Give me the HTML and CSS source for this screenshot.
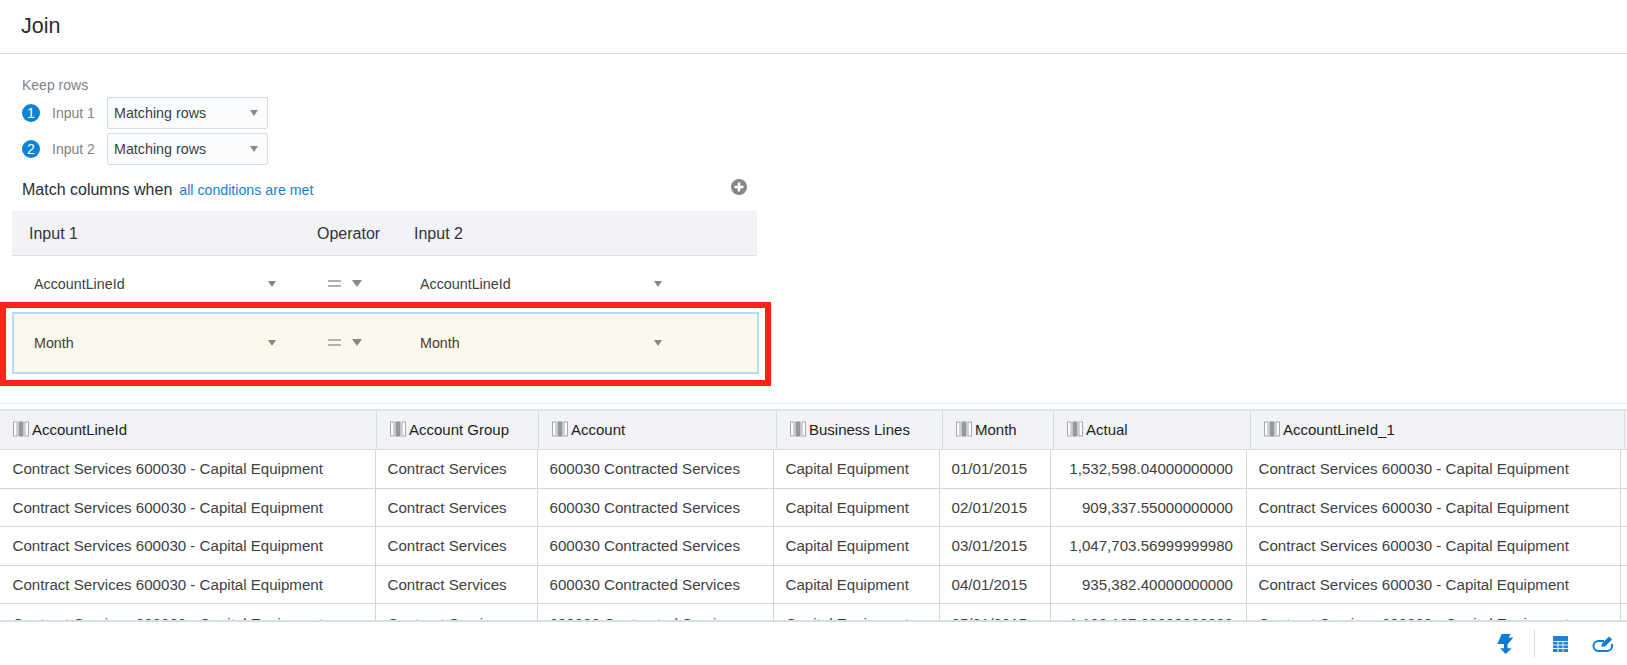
FILE: index.html
```html
<!DOCTYPE html>
<html>
<head>
  <title>Join</title>
  <link rel="stylesheet" href="styles.css">
</head>
<body>
  <svg class="defs" width="0" height="0">
    <symbol id="col-icon" viewBox="0 0 16 16">
      <rect x="0.5" y="1" width="3.5" height="14" fill="#fff" stroke="#a5a8ab"/>
      <rect x="5.5" y="0.5" width="5" height="15" fill="#96999c"/>
      <rect x="12" y="1" width="3.5" height="14" fill="#fff" stroke="#a5a8ab"/>
    </symbol>
  </svg>

  <div class="page">
    <div class="title-bar">Join</div>

    <div class="editor">
      <div class="keep-label">Keep rows</div>
      <div class="keep-row">
        <span class="badge">1</span>
        <span class="keep-input">Input 1</span>
        <div class="select">Matching rows<span class="caret"></span></div>
      </div>
      <div class="keep-row">
        <span class="badge">2</span>
        <span class="keep-input">Input 2</span>
        <div class="select">Matching rows<span class="caret"></span></div>
      </div>

      <div class="match-line">
        <span class="match-text">Match columns when</span>
        <a class="match-link">all conditions are met</a>
        <svg class="add-icon" width="16" height="16" viewBox="0 0 16 16">
          <circle cx="8" cy="8" r="8" fill="#84878b"/>
          <path d="M8 3.5v9M3.5 8h9" stroke="#fff" stroke-width="2.6"/>
        </svg>
      </div>

      <div class="cond-head">
        <div class="cond-col1">Input 1</div>
        <div class="cond-col2">Operator</div>
        <div class="cond-col3">Input 2</div>
      </div>

      <div class="cond-row">
        <div class="cond-col1 cond-cell">AccountLineId<span class="caret"></span></div>
        <div class="cond-col2 cond-op"><span class="equals"></span><span class="caret big"></span></div>
        <div class="cond-col3 cond-cell">AccountLineId<span class="caret"></span></div>
      </div>

      <div class="red-box">
        <div class="cond-row selected">
          <div class="cond-col1 cond-cell">Month<span class="caret"></span></div>
          <div class="cond-col2 cond-op"><span class="equals"></span><span class="caret big"></span></div>
          <div class="cond-col3 cond-cell">Month<span class="caret"></span></div>
        </div>
      </div>
    </div>

    <div class="grid-wrap">
      <div class="grid-head">
        <div class="head-cell"><svg class="col-icon"><use href="#col-icon"/></svg>AccountLineId</div>
        <div class="head-cell"><svg class="col-icon"><use href="#col-icon"/></svg>Account Group</div>
        <div class="head-cell"><svg class="col-icon"><use href="#col-icon"/></svg>Account</div>
        <div class="head-cell"><svg class="col-icon"><use href="#col-icon"/></svg>Business Lines</div>
        <div class="head-cell"><svg class="col-icon"><use href="#col-icon"/></svg>Month</div>
        <div class="head-cell"><svg class="col-icon"><use href="#col-icon"/></svg>Actual</div>
        <div class="head-cell"><svg class="col-icon"><use href="#col-icon"/></svg>AccountLineId_1</div>
      </div>
      <div class="grid-body">
        <div class="grid-row">
          <div class="cell">Contract Services 600030 - Capital Equipment</div>
          <div class="cell">Contract Services</div>
          <div class="cell">600030 Contracted Services</div>
          <div class="cell">Capital Equipment</div>
          <div class="cell">01/01/2015</div>
          <div class="cell num">1,532,598.04000000000</div>
          <div class="cell">Contract Services 600030 - Capital Equipment</div>
        </div>
        <div class="grid-row">
          <div class="cell">Contract Services 600030 - Capital Equipment</div>
          <div class="cell">Contract Services</div>
          <div class="cell">600030 Contracted Services</div>
          <div class="cell">Capital Equipment</div>
          <div class="cell">02/01/2015</div>
          <div class="cell num">909,337.55000000000</div>
          <div class="cell">Contract Services 600030 - Capital Equipment</div>
        </div>
        <div class="grid-row">
          <div class="cell">Contract Services 600030 - Capital Equipment</div>
          <div class="cell">Contract Services</div>
          <div class="cell">600030 Contracted Services</div>
          <div class="cell">Capital Equipment</div>
          <div class="cell">03/01/2015</div>
          <div class="cell num">1,047,703.56999999980</div>
          <div class="cell">Contract Services 600030 - Capital Equipment</div>
        </div>
        <div class="grid-row">
          <div class="cell">Contract Services 600030 - Capital Equipment</div>
          <div class="cell">Contract Services</div>
          <div class="cell">600030 Contracted Services</div>
          <div class="cell">Capital Equipment</div>
          <div class="cell">04/01/2015</div>
          <div class="cell num">935,382.40000000000</div>
          <div class="cell">Contract Services 600030 - Capital Equipment</div>
        </div>
        <div class="grid-row">
          <div class="cell">Contract Services 600030 - Capital Equipment</div>
          <div class="cell">Contract Services</div>
          <div class="cell">600030 Contracted Services</div>
          <div class="cell">Capital Equipment</div>
          <div class="cell">05/01/2015</div>
          <div class="cell num">1,120,167.89000000000</div>
          <div class="cell">Contract Services 600030 - Capital Equipment</div>
        </div>
      </div>
    </div>

    <div class="footer">
      <svg class="foot-icon" width="18" height="20" viewBox="0 0 18 20">
        <path d="M5.700 0H14.700L12.500 3.500H17.300L11.500 10.500V14.300H15.700L9.700 20L4 14.300H8V10H1.300Z" fill="#0d7bd0"/>
      </svg>
      <span class="foot-sep"></span>
      <svg class="foot-icon" width="15" height="16" viewBox="0 0 15 16">
        <rect width="15" height="16" fill="#1a83d6"/>
        <path d="M0 5.500h15M0 9h15M0 12.500h15M5 5.500v10.500M10 5.500v10.500" stroke="#e4f1fb" stroke-width="1"/>
      </svg>
      <svg class="foot-icon last" width="21" height="16" viewBox="0 0 21 16">
        <path d="M12 5H6.500a5 5 0 0 0 0 10H15a5 5 0 0 0 5-5V8" fill="none" stroke="#0d7bd0" stroke-width="2"/>
        <path d="M9 10.500l1-3 7-7 3 3-7 7z" fill="#0d7bd0"/>
      </svg>
    </div>
  </div>
</body>
</html>
```
FILE: styles.css
```css
* {
  box-sizing: border-box;
}

html, body {
  margin: 0;
  height: 100%;
  overflow: hidden;
}

body {
  font-family: "Liberation Sans", Arial, sans-serif;
  font-size: 14px;
  color: #3d3f42;
  background: #fff;
}

.defs {
  display: block;
  height: 0;
}

.page {
  display: flex;
  flex-direction: column;
  height: 665px;
}

.title-bar {
  height: 54px;
  padding: 14px 21px 0;
  font-size: 21.500px;
  color: #2c2d2f;
  border-bottom: 1px solid #d9dbde;
}

.editor {
  height: 350px;
  border-bottom: 1px solid #e1e6e8;
  padding-top: 23px;
}

.keep-label {
  margin-left: 22px;
  height: 20px;
  line-height: 16px;
  color: #808386;
}

.keep-row {
  display: flex;
  align-items: center;
  height: 32px;
  margin: 0 0 4px 22px;
}

.badge {
  width: 18px;
  height: 18px;
  border-radius: 50%;
  background: #0a85d3;
  color: #fff;
  font-size: 14px;
  line-height: 18px;
  text-align: center;
}

.keep-input {
  width: 67px;
  padding-left: 12px;
  color: #808386;
}

.select {
  display: flex;
  align-items: center;
  justify-content: space-between;
  width: 161px;
  height: 32px;
  padding: 0 9px 0 6px;
  font-size: 14.300px;
  background: #fbfcfe;
  border: 1px solid #d5dde4;
  border-radius: 2px;
  color: #3d3f42;
}

.caret {
  width: 0;
  height: 0;
  border-left: 4px solid transparent;
  border-right: 4px solid transparent;
  border-top: 6px solid #85888c;
}

.caret.big {
  border-left-width: 5px;
  border-right-width: 5px;
  border-top-width: 7px;
}

.match-line {
  display: flex;
  align-items: center;
  height: 24px;
  margin: 13px 0 9px 22px;
  width: 725px;
}

.match-text {
  font-size: 16px;
  color: #2c2d2f;
}

.match-link {
  margin-left: 7px;
  font-size: 14.200px;
  color: #1a7fd0;
}

.add-icon {
  margin-left: auto;
  margin-top: -7px;
}

.cond-head {
  display: flex;
  align-items: center;
  width: 745px;
  height: 45px;
  padding-top: 1px;
  margin-left: 12px;
  font-size: 16px;
  color: #333436;
  background: #f1f3f7;
  border-bottom: 1px solid #dfe1e4;
}

.cond-head .cond-col1 {
  padding-left: 17px;
}

.cond-col1 {
  width: 305px;
}

.cond-col2 {
  width: 97px;
}

.cond-col3 {
  width: 265px;
}

.cond-row {
  display: flex;
  align-items: center;
  width: 745px;
  height: 46px;
  padding-top: 10px;
  margin-left: 12px;
  font-size: 14.300px;
}

.cond-cell {
  display: flex;
  align-items: center;
  justify-content: space-between;
  padding-left: 22px;
  padding-right: 41px;
}

.cond-col3.cond-cell {
  padding-left: 6px;
  padding-right: 17px;
}

.cond-op {
  display: flex;
  align-items: center;
  gap: 11px;
  padding-left: 11px;
  margin-top: -2px;
}

.equals {
  width: 13px;
  height: 7px;
  border-top: 2px solid #b0b2b4;
  border-bottom: 2px solid #b0b2b4;
}

.red-box {
  width: 771px;
  height: 84px;
  border: 6px solid #ff2318;
  padding-top: 4px;
}

.selected {
  width: 747px;
  height: 62px;
  padding-top: 0;
  margin-left: 6px;
  background: #fbf9ec;
  border: 2px solid #b3dcf6;
}

.selected .cond-col1 {
  width: 303px;
}

.selected .cond-cell {
  padding-left: 20px;
}

.selected .cond-col3.cond-cell {
  padding-left: 6px;
}

.grid-wrap {
  height: 213px;
  margin-top: 5px;
  border-top: 2px solid #dde3e7;
  border-bottom: 2px solid #d5e0e4;
  overflow: hidden;
}

.grid-head {
  display: grid;
  grid-template-columns: 377px 162px 238px 166px 111px 197px 374px;
  height: 39px;
  background: #f1f3f7;
  border-bottom: 1px solid #d5dde2;
}

.head-cell {
  display: flex;
  align-items: center;
  padding: 0 0 2px 13px;
  font-size: 15px;
  color: #1d1e20;
  border-right: 1px solid #d5dde2;
}

.col-icon {
  width: 16px;
  height: 16px;
  margin-right: 3px;
}

.grid-row {
  display: grid;
  grid-template-columns: 376px 162px 236px 166px 111px 196px 374px;
  height: 38.600px;
  border-bottom: 1px solid #d3d6d9;
}

.cell {
  display: flex;
  align-items: center;
  padding-left: 11.500px;
  font-size: 15.100px;
  white-space: nowrap;
  border-right: 1px solid #d3d6d9;
}

.cell:first-child {
  padding-left: 12.500px;
}

.cell.num {
  justify-content: flex-end;
  padding-right: 13px;
}

.footer {
  display: flex;
  align-items: center;
  justify-content: flex-end;
  flex: 1;
  padding-right: 14px;
}

.foot-icon {
  display: block;
}

.foot-sep {
  width: 1px;
  height: 29px;
  margin: 0 18px 0 20px;
  background: #d5e0e6;
}

.foot-icon.last {
  margin-left: 24px;
}
```
